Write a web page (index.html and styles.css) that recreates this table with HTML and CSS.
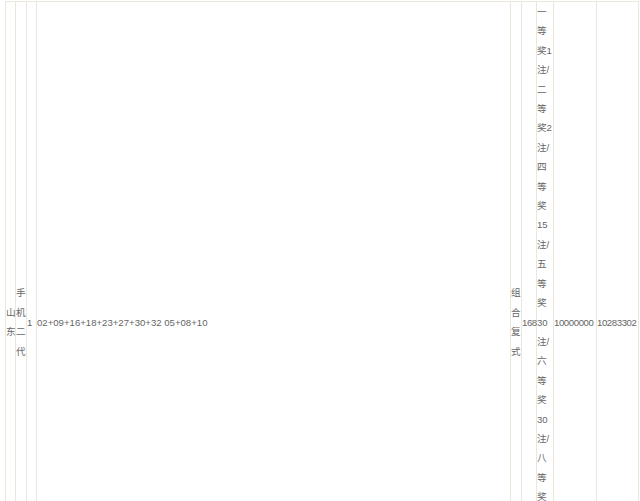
FILE: index.html
```html
<!DOCTYPE html>
<html lang="zh-CN">
<head>
    <meta charset="utf-8">
    <title>开奖详情</title>
    <meta name="viewport" content="width=device-width, initial-scale=1.0">
    <link rel="stylesheet" href="styles.css">
</head>
<body>
    <table class="draw-table">
        <colgroup>
            <col class="col-area">
            <col class="col-type">
            <col class="col-count">
            <col class="col-numbers">
            <col class="col-mode">
            <col class="col-bet">
            <col class="col-prize">
            <col class="col-bonus">
            <col class="col-id">
        </colgroup>
        <tbody>
            <tr>
                <td>山东</td>
                <td>手机二代</td>
                <td>1</td>
                <td>02+09+16+18+23+27+30+32 05+08+10</td>
                <td>组合复式</td>
                <td class="num">168</td>
                <td>一等奖1注/二等奖2注/四等奖15注/五等奖30注/六等奖30注/八等奖60注/九等奖90注</td>
                <td class="num">10000000</td>
                <td class="num">10283302</td>
            </tr>
        </tbody>
    </table>
</body>
</html>
```

FILE: styles.css
```css
body {
    margin: 0;
    background-color: #fff;
    font-family: "Liberation Sans", "Noto Sans CJK SC", sans-serif;
}
.draw-table {
    margin: 1px 0 0 5px;
    width: 634px;
    table-layout: fixed;
    border-collapse: collapse;
    font-size: 9.6px;
    line-height: 19.4px;
    color: #666;
}
.draw-table td {
    border: 1px solid #ebe8da;
    padding: 0;
    text-align: left;
    vertical-align: middle;
}
.draw-table td.num {
    letter-spacing: -0.4px;
}
.col-area { width: 10px; }
.col-type { width: 11px; }
.col-count { width: 10px; }
.col-numbers { width: 474px; }
.col-mode { width: 11px; }
.col-bet { width: 15px; }
.col-prize { width: 17px; }
.col-bonus { width: 43px; }
.col-id { width: 42px; }
```
